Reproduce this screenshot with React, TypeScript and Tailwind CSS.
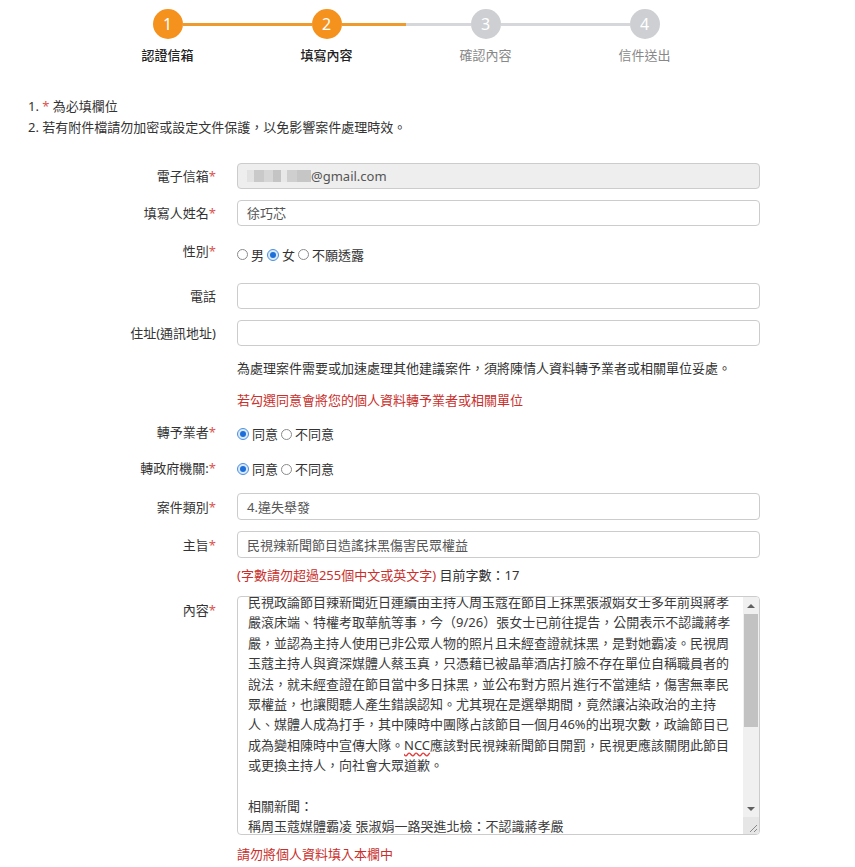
import React from 'react'

const steps = [
  { n: 1, label: '認證信箱', active: true, left: 'bg-transparent', right: 'bg-[#ee9a2c]' },
  { n: 2, label: '填寫內容', active: true, left: 'bg-[#ee9a2c]', right: 'bg-[#ee9a2c]' },
  { n: 3, label: '確認內容', active: false, left: 'bg-[#d5d7da]', right: 'bg-[#d5d7da]' },
  { n: 4, label: '信件送出', active: false, left: 'bg-[#d5d7da]', right: 'bg-transparent' },
]

const content = [
  '民視政論節目辣新聞近日連續由主持人周玉蔻在節目上抹黑張淑娟女士多年前與蔣孝',
  '嚴滾床端、特權考取華航等事，今（9/26）張女士已前往提告，公開表示不認識蔣孝',
  '嚴，並認為主持人使用已非公眾人物的照片且未經查證就抹黑，是對她霸凌。民視周',
  '玉蔻主持人與資深媒體人蔡玉真，只憑藉已被晶華酒店打臉不存在單位自稱職員者的',
  '說法，就未經查證在節目當中多日抹黑，並公布對方照片進行不當連結，傷害無辜民',
  '眾權益，也讓閱聽人產生錯誤認知。尤其現在是選舉期間，竟然讓沾染政治的主持',
  '人、媒體人成為打手，其中陳時中團隊占該節目一個月46%的出現次數，政論節目已',
  'NCC',
  '或更換主持人，向社會大眾道歉。',
  '',
  '相關新聞：',
  '稱周玉蔻媒體霸凌 張淑娟一路哭進北檢：不認識蔣孝嚴',
]

function Star() {
  return <span className="text-[#d9534f]">*</span>
}

function Radio({ checked }: { checked?: boolean }) {
  return checked ? (
    <span className="inline-flex items-center justify-center w-[12px] h-[12px] rounded-full border border-[#4a8fe0] bg-[#dbeafc]">
      <span className="w-[6px] h-[6px] rounded-full bg-[#1c6fd8]" />
    </span>
  ) : (
    <span className="inline-block w-[11px] h-[11px] rounded-full border border-[#8a8a8a] bg-white" />
  )
}

function Row({ label, children, className = '', labelClass = '' }: { label: React.ReactNode; children: React.ReactNode; className?: string; labelClass?: string }) {
  return (
    <div className={`flex ${className}`}>
      <div className={`w-[216px] shrink-0 text-right text-[#333] ${labelClass}`}>{label}</div>
      <div className="ml-[21px] w-[523px]">{children}</div>
    </div>
  )
}

function Input({ value, gray }: { value?: React.ReactNode; gray?: boolean }) {
  return (
    <div className={`h-[26px] w-full rounded-[4px] border border-[#cccccc] px-[9px] flex items-center text-[#555] ${gray ? 'bg-[#eeeeee]' : 'bg-white'}`}>
      {value}
    </div>
  )
}

export default function App() {
  return (
    <div className="min-h-screen bg-white text-[13px] font-['Noto_Sans','Noto_Sans_CJK_TC',sans-serif] text-[#333]">
      {/* Stepper */}
      <div className="flex pl-[88px] pt-[9px]">
        {steps.map((s) => (
          <div key={s.n} className="w-[159px] flex flex-col items-center">
            <div className="flex items-center w-full">
              <div className={`h-[3px] flex-1 ${s.left}`} />
              <div
                className={`w-[30px] h-[30px] rounded-full flex items-center justify-center text-white text-[16px] leading-none ${
                  s.active ? 'bg-[#f5921e]' : 'bg-[#cdcfd3]'
                }`}
              >
                {s.n}
              </div>
              <div className={`h-[3px] flex-1 ${s.right}`} />
            </div>
            <div className={`mt-[7px] leading-[18px] ${s.active ? 'text-[#222] font-medium' : 'text-[#888]'}`}>{s.label}</div>
          </div>
        ))}
      </div>

      {/* Notes */}
      <div className="mt-[32px] pl-[28px] leading-[21px]">
        <div>
          1. <Star /> 為必填欄位
        </div>
        <div>2. 若有附件檔請勿加密或設定文件保護，以免影響案件處理時效。</div>
      </div>

      {/* Form */}
      <div className="mt-[25px] leading-[20px]">
        <Row label={<>電子信箱<Star /></>} className="items-center">
          <Input
            gray
            value={
              <>
                <span className="flex items-center h-[12px] blur-[0.6px]">
                  <span className="w-[7px] h-[12px] bg-[#e2e2e2]" />
                  <span className="w-[10px] h-[12px] bg-[#c9c9c9]" />
                  <span className="w-[9px] h-[12px] bg-[#d6d6d6]" />
                  <span className="w-[8px] h-[12px] bg-[#c4c4c4]" />
                  <span className="w-[6px] h-[12px] bg-[#e8e8e8]" />
                  <span className="w-[10px] h-[12px] bg-[#cfcfcf]" />
                  <span className="w-[14px] h-[12px] bg-[#c6c6c6]" />
                </span>
                <span>@gmail.com</span>
              </>
            }
          />
        </Row>

        <Row label={<>填寫人姓名<Star /></>} className="mt-[11px] items-center">
          <Input value="徐巧芯" />
        </Row>

        <Row label={<>性別<Star /></>} className="mt-[11px] h-[35px] items-center" labelClass="pb-[8px]">
          <div className="flex items-center gap-[3px]">
            <Radio />
            <span>男</span>
            <Radio checked />
            <span>女</span>
            <Radio />
            <span>不願透露</span>
          </div>
        </Row>

        <Row label="電話" className="mt-[11px] items-center">
          <Input />
        </Row>

        <Row label="住址(通訊地址)" className="mt-[11px] items-center">
          <Input />
        </Row>

        <Row label="" className="mt-[11px] h-[22px] items-center">
          <div>為處理案件需要或加速處理其他建議案件，須將陳情人資料轉予業者或相關單位妥處。</div>
        </Row>

        <Row label="" className="mt-[10px] h-[22px] items-center">
          <div className="text-[#c9302c]">若勾選同意會將您的個人資料轉予業者或相關單位</div>
        </Row>

        <Row label={<>轉予業者<Star /></>} className="mt-[11px] h-[24px] items-center" labelClass="pb-[4px]">
          <div className="flex items-center gap-[3px]">
            <Radio checked />
            <span>同意</span>
            <Radio />
            <span>不同意</span>
          </div>
        </Row>

        <Row label={<>轉政府機關:<Star /></>} className="mt-[11px] h-[24px] items-center" labelClass="pb-[2px]">
          <div className="flex items-center gap-[3px]">
            <Radio checked />
            <span>同意</span>
            <Radio />
            <span>不同意</span>
          </div>
        </Row>

        <Row label={<>案件類別<Star /></>} className="mt-[12px] items-center">
          <div className="h-[27px] w-full rounded-[4px] border border-[#cccccc] px-[9px] flex items-center text-[#555]">4.違失舉發</div>
        </Row>

        <Row label={<>主旨<Star /></>} className="mt-[11px] items-center">
          <div className="h-[27px] w-full rounded-[4px] border border-[#cccccc] px-[9px] flex items-center text-[#555]">民視辣新聞節目造謠抹黑傷害民眾權益</div>
        </Row>

        <Row label="" className="mt-[6px] h-[22px] items-center">
          <div>
            <span className="text-[#c9302c]">(字數請勿超過255個中文或英文字)</span> 目前字數：17
          </div>
        </Row>

        <Row label={<>內容<Star /></>} className="mt-[10px]" labelClass="pt-[4px]">
          <div className="h-[239px] w-full rounded-[4px] border border-[#cccccc] bg-white flex overflow-hidden">
            <div className="flex-1 overflow-hidden pl-[10px] text-[#3a3a3a] leading-[20.4px]">
              <div className="-mt-[5px]">
                {content.map((line, i) =>
                  line === 'NCC' ? (
                    <div key={i} className="whitespace-nowrap">
                      成為變相陳時中宣傳大隊。
                      <span className="underline decoration-wavy decoration-[#e23b3b] underline-offset-2">NCC</span>
                      應該對民視辣新聞節目開罰，民視更應該關閉此節目
                    </div>
                  ) : (
                    <div key={i} className="whitespace-nowrap h-[20.4px]">
                      {line}
                    </div>
                  )
                )}
              </div>
            </div>
            {/* scrollbar */}
            <div className="w-[16px] shrink-0 bg-[#f0f0f0] flex flex-col">
              <div className="h-[17px] flex items-center justify-center">
                <span className="w-0 h-0 border-l-[4px] border-r-[4px] border-b-[4px] border-l-transparent border-r-transparent border-b-[#606060]" />
              </div>
              <div className="h-[113px] mx-[1px] bg-[#c2c2c2]" />
              <div className="flex-1" />
              <div className="h-[17px] flex items-center justify-center">
                <span className="w-0 h-0 border-l-[4px] border-r-[4px] border-t-[4px] border-l-transparent border-r-transparent border-t-[#606060]" />
              </div>
              <div className="h-[17px] bg-[#e6e6e6] flex items-end justify-end pr-[1px] pb-[1px]">
                <svg width="10" height="10" viewBox="0 0 10 10">
                  <path d="M9 2 L2 9 M9 6 L6 9" stroke="#888" strokeWidth="1" />
                </svg>
              </div>
            </div>
          </div>
        </Row>

        <Row label="" className="mt-[8px] h-[22px] items-center">
          <div className="text-[#c9302c]">請勿將個人資料填入本欄中</div>
        </Row>
      </div>
    </div>
  )
}
